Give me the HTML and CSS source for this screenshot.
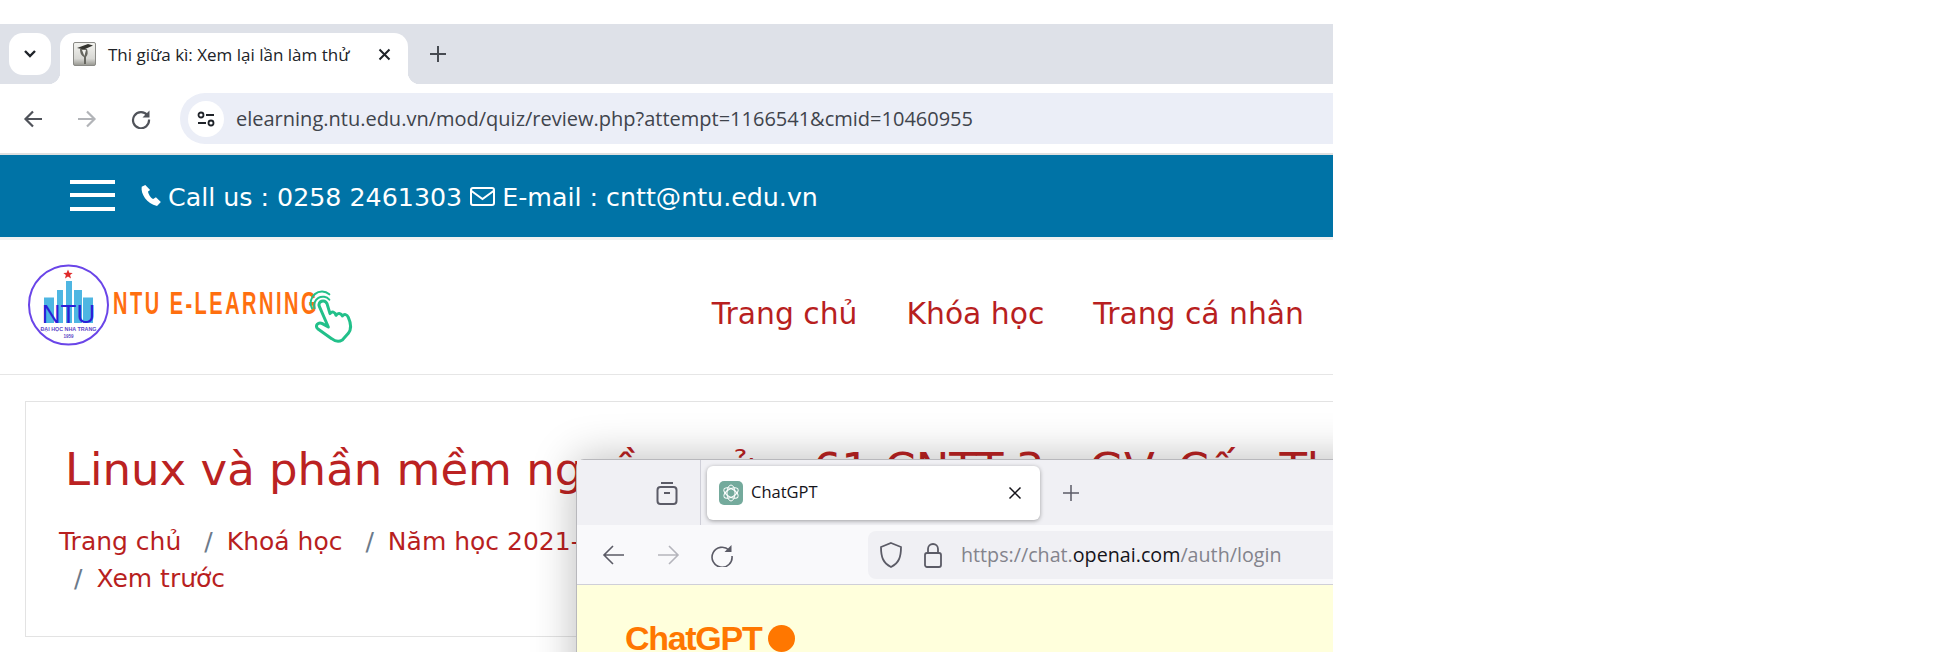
FILE: index.html
```html
<!DOCTYPE html>
<html lang="vi">
<head>
<meta charset="utf-8">
<title>Thi giữa kì: Xem lại lần làm thử</title>
<link rel="stylesheet" href="styles.css">
</head>
<body>
<div class="frame">
  <div class="tabstrip">
    <button class="tabsearch"><svg width="14" height="10" viewBox="0 0 14 10"><path d="M2 2l5 5 5-5" fill="none" stroke="#1f2329" stroke-width="2.4"/></svg></button>
    <div class="tab">
      <svg class="favicon" width="23" height="24" viewBox="0 0 23 24"><defs><linearGradient id="fav" x1="0" y1="0" x2="0" y2="1"><stop offset="0" stop-color="#f4f4f0"/><stop offset=".7" stop-color="#d8d8d4"/><stop offset="1" stop-color="#96968f"/></linearGradient></defs><rect x=".5" y=".5" width="22" height="23" rx="1.500" fill="url(#fav)" stroke="#8a8a86"/><path d="M4 6l11-4 5 1.500-9 4z" fill="#34342f"/><path d="M7 7c0 5 2 7 4 8v7h2v-7c2-2 2-5 1-8z" fill="#66665f"/><path d="M9 8l2.400 6L13 8z" fill="#f2f2ee"/></svg>
      <span class="tabtitle">Thi giữa kì: Xem lại lần làm thử</span>
      <svg class="tabclose" width="13" height="13" viewBox="0 0 13 13"><path d="M1.500 1.500l10 10M11.500 1.500l-10 10" stroke="#1f2329" stroke-width="2"/></svg>
    </div>
    <svg class="newtab" width="16" height="16" viewBox="0 0 16 16"><path d="M8 0v16M0 8h16" stroke="#474b52" stroke-width="2"/></svg>
  </div>
  <div class="toolbar">
    <svg class="navicon" width="20" height="20" viewBox="0 0 20 20"><path d="M19 10H3M10 2.500L2.500 10l7.500 7.500" fill="none" stroke="#50535a" stroke-width="2.200"/></svg>
    <svg class="navicon" width="20" height="20" viewBox="0 0 20 20"><path d="M1 10h16M10 2.500l7.500 7.500-7.500 7.500" fill="none" stroke="#b2b4b8" stroke-width="2.200"/></svg>
    <svg class="navicon" width="20" height="20" viewBox="0 0 20 20"><path d="M16.500 6.500A8 8 0 1 0 18 10.500" fill="none" stroke="#50535a" stroke-width="2.200"/><path d="M18.500 1.500v7h-7z" fill="#50535a"/></svg>
    <div class="omnibox">
      <span class="sitechip"><svg width="18" height="16" viewBox="0 0 18 16"><circle cx="4" cy="4" r="2.500" fill="none" stroke="#1f2329" stroke-width="1.800"/><path d="M9 4h8M1 12h8" stroke="#1f2329" stroke-width="1.800"/><circle cx="14" cy="12" r="2.500" fill="none" stroke="#1f2329" stroke-width="1.800"/></svg></span>
      <span class="urltext">elearning.ntu.edu.vn/mod/quiz/review.php?attempt=1166541&amp;cmid=10460955</span>
    </div>
  </div>
  <div class="contactbar">
    <div class="hamburger"><span></span><span></span><span></span></div>
    <svg class="phone" width="22" height="23" viewBox="0 0 20 21"><path d="M4.800 1L1.500 2.500C.5 9 6 18 15.500 20l3.500-3.500-4.500-4.500-2.500 1.800C9.500 12.500 7.500 9 7.300 6.800L9.200 5.500z" fill="#fff"/></svg>
    <span class="contacttext">Call us : 0258 2461303</span>
    <svg class="mail" width="25" height="19" viewBox="0 0 25 19"><rect x="1" y="1" width="23" height="17" rx="2" fill="none" stroke="#fff" stroke-width="2"/><path d="M1.500 4l11 8 11-8" fill="none" stroke="#fff" stroke-width="2"/></svg>
    <span class="contacttext">E-mail : cntt@ntu.edu.vn</span>
  </div>
  <header class="sitehead">
    <svg class="logo" width="345" height="92" viewBox="0 0 345 92">
      <circle cx="43.500" cy="45" r="39.500" fill="#fff" stroke="#6a45e8" stroke-width="2"/>
      <path d="M43 9.500l1.300 3.200 3.400.2-2.600 2.200.9 3.300-3-1.800-3 1.800.9-3.300-2.600-2.200 3.400-.2z" fill="#e02a2a"/>
      <path d="M19 63V37.500h10V63zM32 63V30h6V63zM41 63V21h6V63zM49 63V30h8V63zM58 63V37.500h10V63z" fill="#4eb6e2"/>
      <text class="logontu" x="43.500" y="63" text-anchor="middle">NTU</text>
      <text class="logouni" x="43.500" y="71" text-anchor="middle" textLength="56" lengthAdjust="spacingAndGlyphs">ĐẠI HỌC NHA TRANG</text>
      <text class="logoyear" x="43.500" y="78" text-anchor="middle">1959</text>
      <text class="logotitle" x="88" y="54" textLength="206" lengthAdjust="spacingAndGlyphs">NTU E-LEARNING</text>
      <g transform="translate(265 23) scale(.3333)" fill="none" stroke="#22c08a" stroke-width="9" stroke-linecap="round" stroke-linejoin="round">
        <path d="M88 70c-6-14 16-24 23-8l9 30c6-8 15-6 18 5 5-8 15-7 19 2 6-7 14-5 18 4 9 20 10 35 0 48l-18 20c-10 6-22 4-32-4l-42-30c-10-8 2-22 14-15l18 10z" fill="#fff"/>
        <path d="M74 76a26 26 0 0 1 44-26M66 76a34 34 0 0 1 52-42" stroke-width="6"/>
      </g>
    </svg>
    <nav class="mainnav">
      <a>Trang chủ</a>
      <a>Khóa học</a>
      <a>Trang cá nhân</a>
    </nav>
  </header>
  <section class="pagecard">
    <h1 class="pagetitle">Linux và phần mềm nguồn mở&nbsp; - 61.CNTT-3 - GV. Cấn Thị Hoa</h1>
    <div class="crumbs">
      <div class="crumbline"><a>Trang chủ</a><i>/</i><a>Khoá học</a><i>/</i><a>Năm học 2021-2022</a></div>
      <div class="crumbline second"><i>/</i><a>Xem trước</a></div>
    </div>
  </section>

  <div class="popup">
    <div class="ff-tabs">
      <div class="ff-side"><svg width="24" height="24" viewBox="0 0 24 24"><path d="M6 2h12" stroke="#5b5b66" stroke-width="2"/><rect x="2.500" y="6" width="19" height="17" rx="3" fill="none" stroke="#5b5b66" stroke-width="2"/><path d="M9 12h6" stroke="#5b5b66" stroke-width="2"/></svg></div>
      <div class="ff-tab">
        <span class="gptfav"><svg width="20" height="20" viewBox="0 0 20 20" fill="none" stroke="#fff" stroke-width="1"><ellipse cx="10" cy="10" rx="4" ry="8"/><ellipse cx="10" cy="10" rx="4" ry="8" transform="rotate(60 10 10)"/><ellipse cx="10" cy="10" rx="4" ry="8" transform="rotate(120 10 10)"/></svg></span>
        <span class="ff-title">ChatGPT</span>
        <svg class="ff-close" width="14" height="14" viewBox="0 0 14 14"><path d="M1.500 1.500l11 11M12.500 1.500l-11 11" stroke="#15141a" stroke-width="1.500"/></svg>
      </div>
      <svg class="ff-new" width="18" height="18" viewBox="0 0 18 18"><path d="M9 1v16M1 9h16" stroke="#5b5b66" stroke-width="1.500"/></svg>
    </div>
    <div class="ff-toolbar">
      <svg class="ff-nav" width="24" height="24" viewBox="0 0 24 24"><path d="M22 12H2M11 3l-9 9 9 9" fill="none" stroke="#5b5b66" stroke-width="1.600"/></svg>
      <svg class="ff-nav" width="24" height="24" viewBox="0 0 24 24"><path d="M2 12h20M13 3l9 9-9 9" fill="none" stroke="#b5b5bc" stroke-width="1.600"/></svg>
      <svg class="ff-nav" width="24" height="24" viewBox="0 0 24 24"><path d="M19 7A10 10 0 1 0 22 13" fill="none" stroke="#5b5b66" stroke-width="1.600"/><path d="M21.500 2v7h-7z" fill="#5b5b66"/></svg>
      <div class="ff-url">
        <svg class="ff-shield" width="24" height="28" viewBox="0 0 24 28"><path d="M12 2l10 4c0 10-2 16-10 20C4 22 2 16 2 6z" fill="none" stroke="#5b5b66" stroke-width="1.800"/></svg>
        <svg class="ff-lock" width="20" height="26" viewBox="0 0 20 26"><rect x="2" y="11" width="16" height="14" rx="2" fill="none" stroke="#5b5b66" stroke-width="1.800"/><path d="M5 11V7a5 5 0 0 1 10 0v4" fill="none" stroke="#5b5b66" stroke-width="1.800"/></svg>
        <span class="ff-urltext">https://chat.<b>openai.com</b>/auth/login</span>
      </div>
    </div>
    <div class="ff-page">
      <span class="gptname">ChatGPT</span><span class="gptdot"></span>
    </div>
  </div>
</div>
</body>
</html>
```
FILE: styles.css
```css
* { box-sizing: border-box; }
html, body { margin: 0; padding: 0; background: #fff; height: 100%; overflow: hidden; }
body { padding-top: 24px; font-family: "DejaVu Sans", sans-serif; }
.frame { position: relative; width: 1333px; height: 628px; overflow: hidden; background: #fff; }

.tabstrip { display: flex; align-items: flex-start; height: 60px; padding: 9px 0 0 9px; background: #dee1e8; }
.tabsearch { display: flex; align-items: center; justify-content: center; width: 42px; height: 42px; padding: 0; border: 0; border-radius: 14px; background: #fff; }
.tab { position: relative; display: flex; align-items: center; width: 348px; height: 51px; margin-left: 9px; padding: 0 0 9px 13px; background: #fff; border-radius: 14px 14px 0 0; }
.tab::before, .tab::after { content: ""; position: absolute; bottom: 0; width: 12px; height: 12px; }
.tab::before { left: -12px; background: radial-gradient(circle at 0 0, #dee1e8 12px, #fff 12.500px); }
.tab::after { right: -12px; background: radial-gradient(circle at 100% 0, #dee1e8 12px, #fff 12.500px); }
.favicon { flex: none; }
.tabtitle { margin-left: 12px; font: 17px/1 "Open Sans", sans-serif; color: #202328; white-space: nowrap; }
.tabclose { position: absolute; left: 318px; top: 15px; }
.newtab { margin: 13px 0 0 22px; }

.toolbar { display: flex; align-items: center; height: 69px; padding: 0 0 0 23px; gap: 34px; background: #fff; }
.navicon { flex: none; }
.omnibox { flex: 1; display: flex; align-items: center; height: 51px; margin-left: -5px; padding-left: 8px; background: #ebeef7; border-radius: 25px 0 0 25px; }
.sitechip { display: flex; align-items: center; justify-content: center; width: 36px; height: 36px; border-radius: 50%; background: #fff; }
.urltext { margin-left: 12px; font: 20px/1 "Open Sans", sans-serif; color: #3f444c; white-space: nowrap; }

.contactbar { display: flex; align-items: center; height: 84px; padding: 0 0 2px 70px; background: #0073a6; border-top: 2px solid #e0e0e0; color: #fff; }
.hamburger { display: flex; flex-direction: column; gap: 9.500px; width: 45px; }
.hamburger span { display: block; height: 4px; background: #fff; }
.phone { margin-left: 25px; }
.contacttext { padding-top: 5px; font-size: 25.300px; line-height: 1; white-space: nowrap; }
.phone + .contacttext { margin-left: 6px; }
.mail { margin: 2px 7px 0 8px; }

.sitehead { display: flex; align-items: center; justify-content: space-between; height: 138px; padding: 0 29px 0 25px; border-top: 3px solid #f1f1f1; border-bottom: 1px solid #e6e6e6; }
.logo { flex: none; margin-top: -2px; }
.logontu { font: 400 26px "Liberation Sans", sans-serif; fill: #2a1fd8; }
.logouni { font: 700 6px "Liberation Sans", sans-serif; fill: #5b47c8; }
.logoyear { font: 700 4.500px "Liberation Sans", sans-serif; fill: #5b47c8; }
.logotitle { font: 700 32px "Liberation Sans", sans-serif; letter-spacing: 4px; fill: #ff6f0f; }
.mainnav { display: flex; gap: 49px; padding-top: 13px; }
.mainnav a { font-size: 29.800px; line-height: 1; color: #b81f1f; white-space: nowrap; }

.pagecard { width: 1400px; height: 236px; margin: 26px 0 0 25px; padding: 41px 0 0 39px; border: 1px solid #e3e3e3; }
.pagetitle { margin: 0; font-size: 45px; font-weight: 400; line-height: 1.2; color: #bb2222; white-space: nowrap; }
.crumbs { margin: 26px 0 0 -6px; }
.crumbline { display: flex; align-items: baseline; height: 37px; font-size: 25px; line-height: 37px; white-space: nowrap; }
.crumbline a { color: #b81f1f; }
.crumbline i { margin: 0 14px 0 23px; font-style: normal; color: #6c7a8a; }
.crumbline.second i { margin-left: 15px; }

.popup { position: absolute; left: 576px; top: 435px; width: 900px; height: 300px; background: #f0f0f4; border: 1px solid #b8b8bc; border-radius: 8px 0 0 0; box-shadow: 0 0 44px rgba(0, 0, 0, .28); }
.ff-tabs { display: flex; align-items: center; height: 65px; background: #f0f0f4; }
.ff-side { display: flex; align-items: center; justify-content: center; width: 124px; height: 65px; padding-left: 56px; border-right: 1px solid #cfcfd8; }
.ff-tab { position: relative; display: flex; align-items: center; width: 333px; height: 54px; margin: 0 0 0 6px; padding-left: 12px; background: #fff; border-radius: 6px; box-shadow: 0 1px 4px rgba(0, 0, 0, .35); }
.gptfav { display: flex; align-items: center; justify-content: center; width: 24px; height: 24px; background: #74aa9c; border-radius: 5px; }
.ff-title { margin-left: 8px; font: 16.500px/1 "Open Sans", sans-serif; color: #15141a; }
.ff-close { position: absolute; left: 301px; top: 20px; }
.ff-new { margin-left: 22px; }
.ff-toolbar { display: flex; align-items: center; height: 60px; padding-left: 25px; gap: 30px; background: #f9f9fb; border-bottom: 1px solid #cfcfd8; }
.ff-nav { flex: none; }
.ff-url { flex: 1; display: flex; align-items: center; height: 48px; margin-left: 104px; padding-left: 11px; background: #f0f0f4; border-radius: 8px 0 0 8px; }
.ff-lock { margin-left: 20px; }
.ff-urltext { margin-left: 18px; font: 19.700px/1 "Open Sans", sans-serif; color: #83838c; white-space: nowrap; }
.ff-urltext b { font-weight: 400; color: #15141a; }
.ff-page { display: flex; align-items: flex-start; height: 200px; padding: 36px 0 0 48px; background: #ffffdc; }
.gptname { font: 700 34px/1 "Liberation Sans", sans-serif; letter-spacing: -1.300px; color: #ff7700; }
.gptdot { width: 27px; height: 27px; margin: 4px 0 0 7px; border-radius: 50%; background: #ff7700; }
```
